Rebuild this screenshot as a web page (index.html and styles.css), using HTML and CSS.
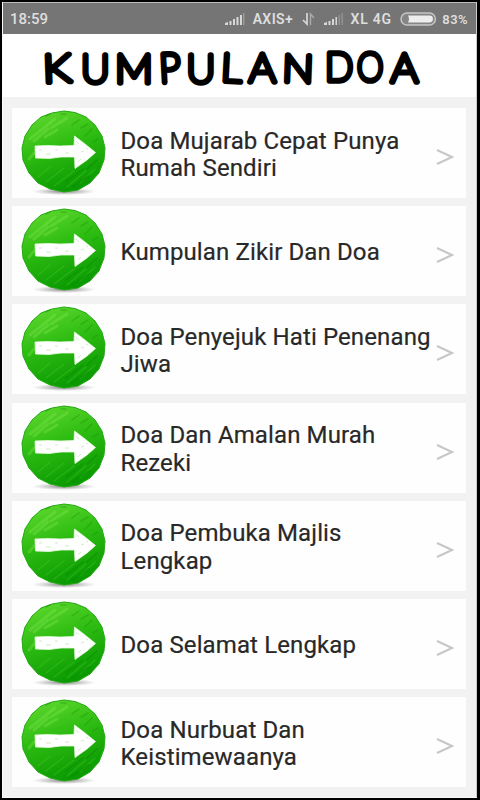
FILE: index.html
```html
<!DOCTYPE html>
<html lang="id">
<head>
<meta charset="utf-8">
<title>Kumpulan Doa</title>
<link rel="stylesheet" href="styles.css">
</head>
<body>
<svg class="defs" width="0" height="0" aria-hidden="true">
  <defs>
    <linearGradient id="green" x1="0.3" y1="0" x2="0.65" y2="1">
      <stop offset="0" stop-color="#5bd62b"/>
      <stop offset="0.45" stop-color="#2cbb11"/>
      <stop offset="1" stop-color="#079600"/>
    </linearGradient>
    <radialGradient id="shade">
      <stop offset="0" stop-color="#555" stop-opacity=".75"/>
      <stop offset="1" stop-color="#888" stop-opacity="0"/>
    </radialGradient>
    <symbol id="go" viewBox="0 0 86 86">
      <ellipse cx="43" cy="81.500" rx="32" ry="3.600" fill="url(#shade)"/>
      <path d="M43 1 54 2.5 65 7 74 15 81 26 84 38 83 50 78 63 69 73 57 80 43 82 29 79 17 73 8 63 2 50 1 38 4 26 11 15 20 7 31 3Z" fill="url(#green)" stroke="#22a912" stroke-width="1" stroke-linejoin="round"/>
      <g fill="none" stroke-linecap="round">
        <path d="M9 29 34 9M13 31 27 19M30 18 46 8M8 49 13 43M24 27 36 20" stroke="#8aeb58" stroke-width="3" opacity=".3"/>
        <path d="M51 15 58 10M60 18 67 14M64 26 71 19M72 32 77 29M25 6 29 4M40 4h5" stroke="#169907" stroke-width="1.500" opacity=".4"/>
        <path d="M17 67 29 57M25 72 43 58M33 76 53 61M46 77 65 61M59 73 74 59" stroke="#56cf32" stroke-width="1.300" opacity=".3"/>
        <path d="M45 72 62 59M51 77 68 66M66 59 76 50" stroke="#008500" stroke-width="2" opacity=".3"/>
      </g>
      <path d="M14 36 27 35.500 39 36 53 35.500 53.500 26 64 34 74.500 42.500 66 50 54 58.500 53.500 47 40 47 28 48.500 14.500 48Z" fill="#fff" stroke="#e4fbdc" stroke-width=".8" stroke-linejoin="round"/>
      <path d="M18 40h3M25 44h5M34 40h3M55 31l3 3M60 42l3-1M57 52l3-3M65 38l2 1M44 43h4" stroke="#a6df92" stroke-width="1" opacity=".55"/>
    </symbol>
    <symbol id="signal" viewBox="0 0 20 14">
      <path d="M0 13v-2l3-1v3zM4.500 13V9h2v4zM8 13V7h2v6zM11.500 13V5h2v8zM15 13V3h2v10z" fill="#d8d8d8"/>
      <path d="M18 13V1h1.500v12z" fill="#999"/>
    </symbol>
  </defs>
</svg>
<div class="phone">
  <div class="status">
    <span class="time">18:59</span>
    <svg class="sig" width="20" height="14"><use href="#signal"/></svg>
    <span class="carrier">AXIS+</span>
    <svg class="data" width="13" height="14" viewBox="0 0 13 14"><path d="M5 1v11L1 8" fill="none" stroke="#d8d8d8" stroke-width="1.700"/><path d="M8.500 13V2l3.500 4" fill="none" stroke="#aaa" stroke-width="1.500"/></svg>
    <svg class="sig2" width="20" height="14" viewBox="0 0 20 14"><path d="M0 13v-2l3-1v3zM4.500 13V9h2v4zM8 13V7h2v6zM11.500 13V5h1.500v8z" fill="#d8d8d8"/><path d="M14.500 13V3h1.500v10zM17.500 13V1H19v12z" fill="#929292"/></svg>
    <span class="net">XL 4G</span>
    <svg class="battery" width="37" height="14" viewBox="0 0 37 14"><rect x="1" y="1" width="34.500" height="12" rx="6" fill="#858585" stroke="#c6c6c6" stroke-width="1.500"/><path d="M8 3.500h21.500a3.500 3.500 0 0 1 0 7H8q2-3.500 0-7z" fill="#ededed"/></svg>
    <span class="pct">83%</span>
  </div>
  <header class="header">
    <svg class="title" width="474" height="63" viewBox="2 34 474 63" role="img" aria-label="KUMPULAN DOA">
      <text transform="translate(43.500 82.500) rotate(-2) scale(1.170 1)">K</text>
      <text transform="translate(81 82.500) scale(1.020 1)">U</text>
      <text transform="translate(115 82.500) scale(1.090 1)">M</text>
      <text transform="translate(160 82.500) rotate(-3) scale(.970 1.030)">P</text>
      <text transform="translate(186.500 82.500) scale(1.020 1)">U</text>
      <text transform="translate(220.500 81) rotate(3) scale(1.050 1)">L</text>
      <text transform="translate(249 82) scale(1.070 1)">A</text>
      <text transform="translate(282 81.500) rotate(2) scale(1.070 .980)">N</text>
      <text transform="translate(325 81) scale(.950 1)">D</text>
      <text transform="translate(357 81) scale(.860 1.010)">O</text>
      <text transform="translate(391 81.500) scale(1.080 1.020)">A</text>
    </svg>
  </header>
  <main class="list">
    <div class="card"><svg class="icon"><use href="#go"/></svg><span class="label">Doa Mujarab Cepat Punya<br>Rumah Sendiri</span><svg class="chev" viewBox="0 0 18 18"><path d="M1 2 16 9 1 16"/></svg></div>
    <div class="card"><svg class="icon"><use href="#go"/></svg><span class="label">Kumpulan Zikir Dan Doa</span><svg class="chev" viewBox="0 0 18 18"><path d="M1 2 16 9 1 16"/></svg></div>
    <div class="card"><svg class="icon"><use href="#go"/></svg><span class="label">Doa Penyejuk Hati Penenang<br>Jiwa</span><svg class="chev" viewBox="0 0 18 18"><path d="M1 2 16 9 1 16"/></svg></div>
    <div class="card"><svg class="icon"><use href="#go"/></svg><span class="label">Doa Dan Amalan Murah<br>Rezeki</span><svg class="chev" viewBox="0 0 18 18"><path d="M1 2 16 9 1 16"/></svg></div>
    <div class="card"><svg class="icon"><use href="#go"/></svg><span class="label">Doa Pembuka Majlis<br>Lengkap</span><svg class="chev" viewBox="0 0 18 18"><path d="M1 2 16 9 1 16"/></svg></div>
    <div class="card"><svg class="icon"><use href="#go"/></svg><span class="label">Doa Selamat Lengkap</span><svg class="chev" viewBox="0 0 18 18"><path d="M1 2 16 9 1 16"/></svg></div>
    <div class="card"><svg class="icon"><use href="#go"/></svg><span class="label">Doa Nurbuat Dan<br>Keistimewaanya</span><svg class="chev" viewBox="0 0 18 18"><path d="M1 2 16 9 1 16"/></svg></div>
  </main>
</div>
</body>
</html>
```
FILE: styles.css
```css
* { box-sizing: border-box; }
body { margin: 0; background: #000; font-family: Roboto, sans-serif; }
.defs { position: absolute; }
.phone {
  width: 475px;
  height: 796px;
  margin: 2px 3px 2px 2px;
  background: #f2f2f2;
  border-left: 1px solid #fafafa;
  border-right: 1px solid #ccc;
  border-bottom: 1px solid #fafafa;
  overflow: hidden;
}
.status {
  height: 32px;
  display: flex;
  align-items: center;
  padding: 1px 8px 0 7px;
  background: #757575;
  border-top: 1px solid #bbb;
  color: #dedede;
  font-size: 14px;
  font-weight: 600;
  white-space: nowrap;
}
.time { width: 215px; font-size: 15px; font-weight: 500; }
.sig { margin-right: 8px; }
.carrier { width: 49px; letter-spacing: 0.4px; }
.data { margin-right: 9px; }
.sig2 { margin-right: 7px; }
.net { width: 50px; letter-spacing: 0.8px; }
.battery { margin-right: 5px; }
.pct { font-size: 13px; letter-spacing: 0.4px; }
.header { height: 63px; background: #fff; }
.title { display: block; margin-left: -1px; }
.title text {
  font-family: Lato, sans-serif;
  font-size: 39px;
  font-weight: 100;
  fill: #000;
  stroke: #000;
  stroke-width: 5.6px;
  stroke-linejoin: round;
  stroke-linecap: round;
}
.list { display: grid; gap: 8.2px; padding: 11px 10px 0 9px; }
.card {
  height: 90px;
  display: flex;
  align-items: center;
  background: #fefefe;
  padding-left: 9px;
}
.icon { width: 86px; height: 86px; flex: none; }
.label {
  width: 313px;
  margin: 4px 0 0 13.5px;
  flex: none;
  color: #282828;
  font-size: 24px;
  line-height: 27.5px;
  letter-spacing: 0.12px;
  -webkit-text-stroke: 0.2px #282828;
  white-space: nowrap;
}
.chev {
  width: 18px;
  height: 18px;
  margin: 8px 0 0 2px;
  fill: none;
  stroke: #c7c7c7;
  stroke-width: 2;
}
```
